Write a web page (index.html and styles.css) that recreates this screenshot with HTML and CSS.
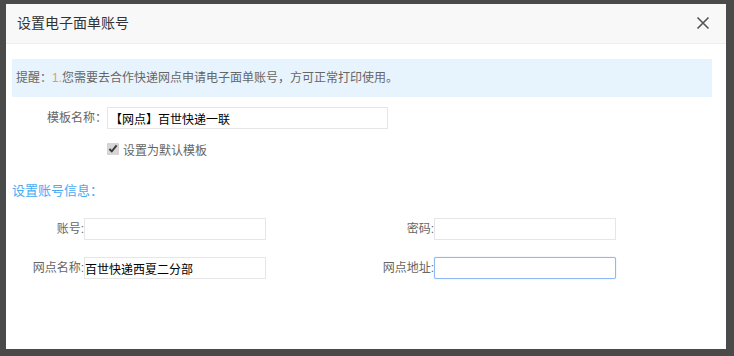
FILE: index.html
```html
<!DOCTYPE html>
<html lang="zh-CN">
<head>
    <meta charset="UTF-8">
    <title>设置电子面单账号</title>
    <link rel="stylesheet" href="styles.css">
</head>
<body>
    <div class="dialog">
        <div class="dialog-header">
            <span class="dialog-title">设置电子面单账号</span>
            <span class="dialog-close">
                <svg width="14" height="14" viewBox="0 0 14 14">
                    <path d="M1.5 1.5 L12.5 12.5 M12.5 1.5 L1.5 12.5" stroke="#555" stroke-width="1.6" fill="none"/>
                </svg>
            </span>
        </div>

        <div class="dialog-body">
            <!-- Tip -->
            <div class="tip">
                <span>提醒：</span><span class="tip-num">1.</span><span>您需要去合作快递网点申请电子面单账号，方可正常打印使用。</span>
            </div>

            <!-- Template -->
            <div class="template-row">
                <label class="template-label" for="tplName">模板名称：</label>
                <input type="text" id="tplName" class="tpl-input" value="【网点】百世快递一联">
            </div>
            <div class="check-row">
                <input type="checkbox" id="isDefault" checked>
                <label for="isDefault">设置为默认模板</label>
            </div>

            <!-- Account -->
            <h3 class="section-title">设置账号信息：</h3>
            <div class="account-grid">
                <label class="field-label" for="account">账号:</label>
                <input type="text" id="account" class="field-input">
                <label class="field-label" for="password">密码:</label>
                <input type="text" id="password" class="field-input">

                <label class="field-label" for="siteName">网点名称:</label>
                <input type="text" id="siteName" class="field-input" value="百世快递西夏二分部">
                <label class="field-label" for="siteAddr">网点地址:</label>
                <input type="text" id="siteAddr" class="field-input focused">
            </div>
        </div>
    </div>
</body>
</html>
```

FILE: styles.css
```css
body {
    margin: 0;
    background-color: #4a4a4a;
    font-family: "Liberation Sans", "Noto Sans CJK SC", sans-serif;
    font-size: 12px;
    color: #666;
    padding: 4px 0 0 6px;
}
.dialog {
    width: 720px;
    height: 345px;
    background-color: #fff;
    box-shadow: 0 1px 0 #8a8a8a;
}
.dialog-header {
    height: 39px;
    background-color: #f8f8f8;
    border-bottom: 1px solid #eee;
    display: flex;
    align-items: center;
    justify-content: space-between;
    padding: 0 16px 0 11px;
}
.dialog-title {
    font-size: 14px;
    color: #333;
    line-height: 20px;
    margin-top: -1px;
}
.dialog-close {
    display: flex;
    width: 14px;
    height: 14px;
    margin-top: -1px;
}
.dialog-body {
    padding: 15px 14px 0 6px;
}
.tip {
    height: 38px;
    line-height: 38px;
    background-color: #e8f4fd;
    padding-left: 4px;
    color: #666;
}
.tip-num {
    color: #e6a23c;
}
.template-row {
    display: flex;
    align-items: center;
    margin-top: 10px;
}
.template-label {
    width: 95px;
    text-align: right;
    line-height: 22px;
}
input[type="text"] {
    box-sizing: border-box;
    height: 22px;
    border: 1px solid #e6e6e6;
    font-family: "Liberation Sans", "Noto Sans CJK SC", sans-serif;
    font-size: 12px;
    color: #000;
    outline: none;
    margin: 0;
}
.tpl-input {
    width: 281px;
    padding: 0 2px;
}
.check-row {
    display: flex;
    align-items: center;
    margin: 13px 0 0 95px;
    height: 14px;
}
.check-row input {
    width: 12px;
    height: 12px;
    margin: 0 4px 0 0;
    accent-color: #d6d6d6;
}
.section-title {
    margin: 26px 0 0;
    font-size: 13px;
    font-weight: normal;
    line-height: 18px;
    color: #46acf3;
}
.account-grid {
    display: grid;
    grid-template-columns: 72px 182px 168px 182px;
    row-gap: 17px;
    align-items: center;
    margin-top: 18px;
}
.field-label {
    text-align: right;
    line-height: 22px;
}
.field-input {
    width: 182px;
    padding: 0;
}
.field-input.focused {
    border-color: #8fb9f6;
    border-radius: 2px;
    box-shadow: 0 0 1px #8fb9f6;
}
```
